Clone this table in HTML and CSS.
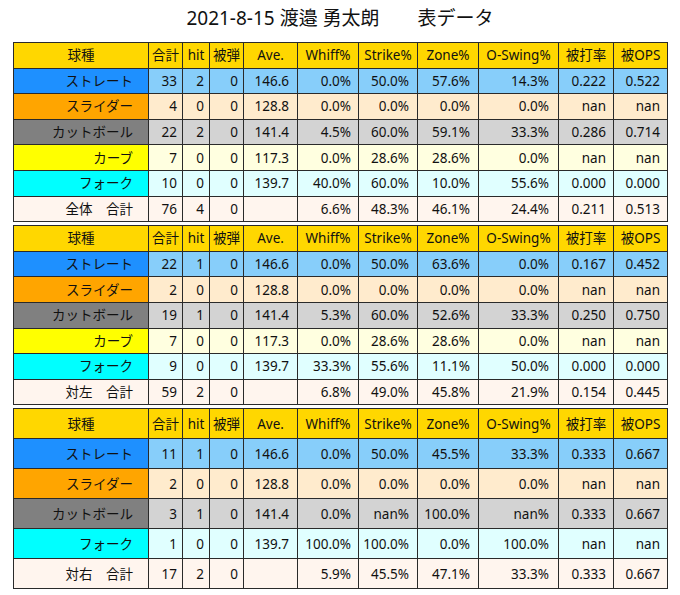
FILE: index.html
```html
<!DOCTYPE html>
<html lang="ja">
<head>
<meta charset="utf-8">
<title>2021-8-15 渡邉 勇太朗 表データ</title>
<link rel="stylesheet" href="styles.css">
</head>
<body>
<div class="page">
  <h1 class="title">2021-8-15 渡邉 勇太朗　　表データ</h1>

  <table class="stats">
    <colgroup><col class="w0"><col class="w1"><col class="w2"><col class="w3"><col class="w4"><col class="w5"><col class="w6"><col class="w7"><col class="w8"><col class="w9"><col class="w10"></colgroup>
    <tr class="hd"><td>球種</td><td>合計</td><td>hit</td><td>被弾</td><td>Ave.</td><td>Whiff%</td><td>Strike%</td><td>Zone%</td><td>O-Swing%</td><td>被打率</td><td>被OPS</td></tr>
    <tr class="st"><td>ストレート</td><td>33</td><td>2</td><td>0</td><td>146.6</td><td>0.0%</td><td>50.0%</td><td>57.6%</td><td>14.3%</td><td>0.222</td><td>0.522</td></tr>
    <tr class="sl"><td>スライダー</td><td>4</td><td>0</td><td>0</td><td>128.8</td><td>0.0%</td><td>0.0%</td><td>0.0%</td><td>0.0%</td><td>nan</td><td>nan</td></tr>
    <tr class="ct"><td>カットボール</td><td>22</td><td>2</td><td>0</td><td>141.4</td><td>4.5%</td><td>60.0%</td><td>59.1%</td><td>33.3%</td><td>0.286</td><td>0.714</td></tr>
    <tr class="cv"><td>カーブ</td><td>7</td><td>0</td><td>0</td><td>117.3</td><td>0.0%</td><td>28.6%</td><td>28.6%</td><td>0.0%</td><td>nan</td><td>nan</td></tr>
    <tr class="fk"><td>フォーク</td><td>10</td><td>0</td><td>0</td><td>139.7</td><td>40.0%</td><td>60.0%</td><td>10.0%</td><td>55.6%</td><td>0.000</td><td>0.000</td></tr>
    <tr class="tot"><td>全体　合計</td><td>76</td><td>4</td><td>0</td><td></td><td>6.6%</td><td>48.3%</td><td>46.1%</td><td>24.4%</td><td>0.211</td><td>0.513</td></tr>
  </table>

  <table class="stats">
    <colgroup><col class="w0"><col class="w1"><col class="w2"><col class="w3"><col class="w4"><col class="w5"><col class="w6"><col class="w7"><col class="w8"><col class="w9"><col class="w10"></colgroup>
    <tr class="hd"><td>球種</td><td>合計</td><td>hit</td><td>被弾</td><td>Ave.</td><td>Whiff%</td><td>Strike%</td><td>Zone%</td><td>O-Swing%</td><td>被打率</td><td>被OPS</td></tr>
    <tr class="st"><td>ストレート</td><td>22</td><td>1</td><td>0</td><td>146.6</td><td>0.0%</td><td>50.0%</td><td>63.6%</td><td>0.0%</td><td>0.167</td><td>0.452</td></tr>
    <tr class="sl"><td>スライダー</td><td>2</td><td>0</td><td>0</td><td>128.8</td><td>0.0%</td><td>0.0%</td><td>0.0%</td><td>0.0%</td><td>nan</td><td>nan</td></tr>
    <tr class="ct"><td>カットボール</td><td>19</td><td>1</td><td>0</td><td>141.4</td><td>5.3%</td><td>60.0%</td><td>52.6%</td><td>33.3%</td><td>0.250</td><td>0.750</td></tr>
    <tr class="cv"><td>カーブ</td><td>7</td><td>0</td><td>0</td><td>117.3</td><td>0.0%</td><td>28.6%</td><td>28.6%</td><td>0.0%</td><td>nan</td><td>nan</td></tr>
    <tr class="fk"><td>フォーク</td><td>9</td><td>0</td><td>0</td><td>139.7</td><td>33.3%</td><td>55.6%</td><td>11.1%</td><td>50.0%</td><td>0.000</td><td>0.000</td></tr>
    <tr class="tot"><td>対左　合計</td><td>59</td><td>2</td><td>0</td><td></td><td>6.8%</td><td>49.0%</td><td>45.8%</td><td>21.9%</td><td>0.154</td><td>0.445</td></tr>
  </table>

  <table class="stats tall">
    <colgroup><col class="w0"><col class="w1"><col class="w2"><col class="w3"><col class="w4"><col class="w5"><col class="w6"><col class="w7"><col class="w8"><col class="w9"><col class="w10"></colgroup>
    <tr class="hd"><td>球種</td><td>合計</td><td>hit</td><td>被弾</td><td>Ave.</td><td>Whiff%</td><td>Strike%</td><td>Zone%</td><td>O-Swing%</td><td>被打率</td><td>被OPS</td></tr>
    <tr class="st"><td>ストレート</td><td>11</td><td>1</td><td>0</td><td>146.6</td><td>0.0%</td><td>50.0%</td><td>45.5%</td><td>33.3%</td><td>0.333</td><td>0.667</td></tr>
    <tr class="sl"><td>スライダー</td><td>2</td><td>0</td><td>0</td><td>128.8</td><td>0.0%</td><td>0.0%</td><td>0.0%</td><td>0.0%</td><td>nan</td><td>nan</td></tr>
    <tr class="ct"><td>カットボール</td><td>3</td><td>1</td><td>0</td><td>141.4</td><td>0.0%</td><td>nan%</td><td>100.0%</td><td>nan%</td><td>0.333</td><td>0.667</td></tr>
    <tr class="fk"><td>フォーク</td><td>1</td><td>0</td><td>0</td><td>139.7</td><td>100.0%</td><td>100.0%</td><td>0.0%</td><td>100.0%</td><td>nan</td><td>nan</td></tr>
    <tr class="tot"><td>対右　合計</td><td>17</td><td>2</td><td>0</td><td></td><td>5.9%</td><td>45.5%</td><td>47.1%</td><td>33.3%</td><td>0.333</td><td>0.667</td></tr>
  </table>
</div>
</body>
</html>
```

FILE: styles.css
```css
* { box-sizing: border-box; }

html, body {
  margin: 0;
  padding: 0;
  background: #ffffff;
}

body {
  font-family: "Noto Sans", "Noto Sans CJK JP", sans-serif;
  color: #111111;
  width: 680px;
  height: 595px;
  overflow: hidden;
}

.page {
  padding: 6px 0 0 13px;
}

.title {
  margin: 0 0 12px -13px;
  width: 680px;
  text-align: center;
  font-size: 19px;
  font-weight: normal;
  line-height: 24px;
  height: 24px;
}

.stats {
  border-collapse: collapse;
  table-layout: fixed;
  width: 654px;
  margin-bottom: 3px;
  font-size: 13.5px;
}

.stats td {
  border: 1px solid #2a2a2a;
  height: 25.6px;
  padding: 0 6px 0 0;
  text-align: right;
  white-space: nowrap;
  line-height: 18px;
  vertical-align: middle;
}

.stats.tall td {
  height: 30px;
}

.w0 { width: 135px; }
.w1 { width: 34px; }
.w2 { width: 27px; }
.w3 { width: 34px; }
.w4 { width: 54px; }
.w5 { width: 61px; }
.w6 { width: 59px; }
.w7 { width: 61px; }
.w8 { width: 80px; }
.w9 { width: 55px; }
.w10 { width: 54px; }

.stats td:nth-child(1) { padding-right: 15px; }
.stats td:nth-child(2) { padding-right: 5px; }
.stats td:nth-child(3) { padding-right: 5px; }
.stats td:nth-child(4) { padding-right: 5px; }
.stats td:nth-child(5) { padding-right: 8px; }
.stats td:nth-child(6) { padding-right: 7px; }
.stats td:nth-child(7) { padding-right: 8px; }
.stats td:nth-child(8) { padding-right: 8px; }
.stats td:nth-child(9) { padding-right: 9px; }
.stats td:nth-child(10) { padding-right: 7px; }
.stats td:nth-child(11) { padding-right: 7px; }

.stats tr.hd td {
  background: #ffd700;
  text-align: center;
  padding: 0;
}

.st td { background: #87cefa; }
.st td:first-child { background: #1e90ff; }

.sl td { background: #ffebcd; }
.sl td:first-child { background: #ffa500; }

.ct td { background: #d3d3d3; }
.ct td:first-child { background: #808080; }

.cv td { background: #ffffe0; }
.cv td:first-child { background: #ffff00; }

.fk td { background: #e0ffff; }
.fk td:first-child { background: #00ffff; }

.tot td { background: #fff5ee; }
```
